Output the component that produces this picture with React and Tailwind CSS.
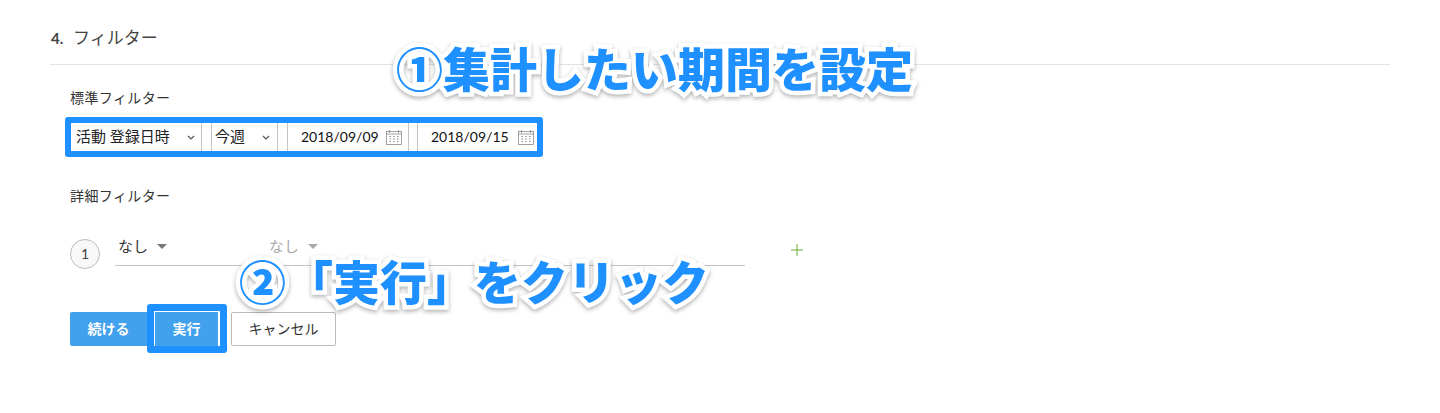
import React from 'react';

const jp = '[font-family:Lato,"Noto_Sans_CJK_JP",sans-serif]';

const Chevron = () => (
  <svg width="8" height="5" viewBox="0 0 8 5" fill="none" stroke="#555" strokeWidth="1.2">
    <path d="M1 1l3 3 3-3" />
  </svg>
);

const Calendar = () => (
  <svg width="16" height="15" viewBox="0 0 16 15" fill="none" stroke="#8a8a8a" strokeWidth="0.8">
    <rect x="0.5" y="1.5" width="15" height="13" />
    <path d="M3.5 0v3M12.5 0v3M0.5 4h15" />
    <path
      d="M3.5 6.5h1.5M7.2 6.5h1.5M11 6.5h1.5M3.5 9h1.5M7.2 9h1.5M11 9h1.5M3.5 11.5h1.5M7.2 11.5h1.5M11 11.5h1.5"
      strokeWidth="1.2"
    />
  </svg>
);

const Caret = ({ className }) => <span className={`w-0 h-0 border-x-[5px] border-x-transparent border-t-[5px] ${className}`} />;

const Annotation = ({ className, children }) => (
  <div
    className={`absolute whitespace-nowrap font-black text-[#1e90ff] text-[47px] leading-none tracking-[0px] [font-family:"Noto_Sans_CJK_JP",sans-serif] [-webkit-text-stroke:9px_white] [paint-order:stroke_fill] drop-shadow-[0_2px_2px_rgba(0,0,0,0.3)] ${className}`}
  >
    {children}
  </div>
);

export default function App() {
  return (
    <div className={`relative h-[413px] w-[1440px] overflow-hidden bg-white px-[50px] pt-[28px] text-[#333] ${jp}`}>
      <div className="flex h-[37px] items-start border-b border-[#e4e4e4] pl-px text-[17px] leading-5 text-[#444]">
        <span className="w-[22px] text-[15px] font-bold">4.</span>
        <span>フィルター</span>
      </div>

      <div className="pl-5">
        <div className="mt-[23px] text-sm leading-5 tracking-[0.4px]">標準フィルター</div>

        <div className="-ml-[5px] mt-[9px] flex h-[40px] w-[478px] rounded-[3px] border-[6px] border-[#1e90ff] bg-white text-[15px] text-[#222]">
          <div className="flex w-[130px] items-center justify-between pl-[5px] pr-[6px]">
            <span className="-mt-px">活動 登録日時</span>
            <Chevron />
          </div>
          <div className="w-[11px] border-x border-[#c4c4c4]" />
          <div className="flex w-[65px] items-center justify-between pl-[3px] pr-[7px]">
            <span className="-mt-px">今週</span>
            <Chevron />
          </div>
          <div className="w-[11px] border-x border-[#c4c4c4]" />
          <div className="flex w-[120px] items-center justify-between pl-[13px] pr-[6px] text-sm">
            <span className="text-[#111]">2018/09/09</span>
            <Calendar />
          </div>
          <div className="w-[10px] border-x border-[#c4c4c4]" />
          <div className="flex flex-1 items-center justify-between pl-[13px] pr-[3px] text-sm">
            <span className="text-[#111]">2018/09/15</span>
            <Calendar />
          </div>
        </div>

        <div className="mt-[29px] text-sm leading-5 tracking-[0.4px]">詳細フィルター</div>

        <div className="mt-[33px] flex items-start">
          <div className="flex h-[30px] w-[30px] items-center justify-center rounded-full border border-[#bbb] bg-[#f8f8f8] text-sm text-[#444]">
            1
          </div>
          <div className="-mt-[3px] ml-[15px] flex h-[30px] w-[630px] items-start border-b border-[#c4c4c4] text-[15px]">
            <div className="flex w-[154px] items-center gap-[9px] pl-[3px] leading-5">
              <span>なし</span>
              <Caret className="border-t-[#777]" />
            </div>
            <div className="flex items-center gap-[9px] leading-5 text-[#aaa]">
              <span>なし</span>
              <Caret className="border-t-[#aaa]" />
            </div>
          </div>
          <svg className="ml-[45px] mt-[4px]" width="14" height="14" viewBox="0 0 14 14" stroke="#6fae35" strokeWidth="1">
            <path d="M7 1v12M1 7h12" />
          </svg>
        </div>

        <div className="mt-[35px] flex h-[49px] items-center text-sm">
          <button className="mt-[1px] h-[34px] w-[77px] rounded-l-[2px] bg-[#42a1ec] font-bold text-white">続ける</button>
          <div className="h-[49px] w-[80px] rounded-[3px] border-[7px] border-[#1e90ff] bg-white">
            <button className="h-[35px] w-[65px] border-x border-t border-white bg-[#42a1ec] font-bold text-white">実行</button>
          </div>
          <button className="ml-[4px] mt-[1px] h-[34px] w-[105px] rounded-[2px] border border-[#bbb] bg-white text-[#333]">キャンセル</button>
        </div>
      </div>

      <Annotation className="left-[396px] top-[43px]">①集計したい期間を設定</Annotation>
      <Annotation className="left-[239px] top-[256px]">②「実行」をクリック</Annotation>
    </div>
  );
}
